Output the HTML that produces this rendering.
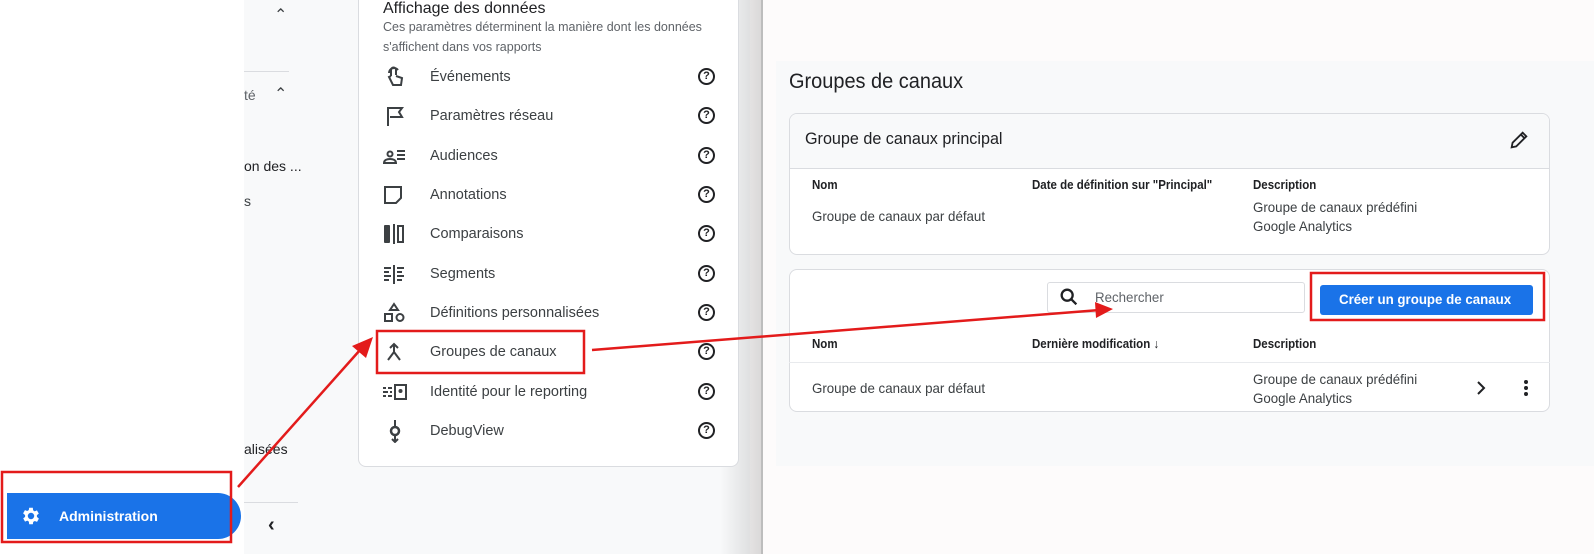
<!DOCTYPE html>
<html><head><meta charset="utf-8"><style>
*{box-sizing:border-box;margin:0;padding:0}
body{width:1594px;height:554px;position:relative;overflow:hidden;background:#fdfbfb;font-family:"Liberation Sans",sans-serif;color:#3c4043}
.a{position:absolute}
.t{font-size:14px;color:#3c4043;white-space:nowrap}
.row{position:absolute;left:382px;width:340px;height:40px}
.row .ic{position:absolute;left:0;top:8px;width:26px;height:24px}
.row .lb{position:absolute;left:48px;top:12px;font-size:14.5px;color:#3c4043}
.row .q{position:absolute;left:316px;top:11px;width:17px;height:17px;border:2px solid #202124;border-radius:50%;font-size:11px;font-weight:bold;text-align:center;line-height:13px;color:#202124}
.cond{display:inline-block;transform:scaleX(.95);transform-origin:left center;white-space:nowrap}
.c2{display:inline-block;transform:scaleX(.92);transform-origin:left center;white-space:nowrap}
.sm{font-size:12.5px;color:#3c4043}
</style></head><body>
<div class="a" style="left:0;top:0;width:244px;height:554px;background:#fff"></div>
<div class="a" style="left:244px;top:0;width:506px;height:554px;background:#f8f9fa"></div>
<div class="a" style="left:720px;top:0;width:42px;height:554px;background:linear-gradient(90deg,rgba(0,0,0,0),rgba(0,0,0,.14))"></div>
<div class="a" style="left:761px;top:0;width:2px;height:554px;background:#bdbdbd"></div>

<div class="a" style="left:274px;top:5px;font-size:16px;color:#3c4043">&#8963;</div>
<div class="a" style="left:244px;top:71px;width:45px;height:1px;background:#dadce0"></div>
<div class="a t" style="left:244px;top:87px;color:#5f6368">té</div>
<div class="a" style="left:274px;top:84px;font-size:16px">&#8963;</div>
<div class="a t" style="left:244px;top:158px;color:#202124">on des ...</div>
<div class="a t" style="left:244px;top:193px">s</div>
<div class="a t" style="left:244px;top:441px;color:#202124">alisées</div>
<div class="a" style="left:244px;top:502px;width:54px;height:1px;background:#dadce0"></div>
<div class="a" style="left:268px;top:514px;font-size:20px;font-weight:bold;color:#202124">&#8249;</div>

<div class="a" style="left:7px;top:493px;width:234px;height:46px;background:#1a73e8;border-radius:0 23px 23px 0"></div>
<svg class="a" style="left:20px;top:505px" width="22" height="22" viewBox="0 0 24 24"><path fill="#fff" d="M19.4 13a7.5 7.5 0 000-2l2.1-1.6-2-3.5-2.5 1a7.3 7.3 0 00-1.7-1L15 3h-4l-.4 2.6a7.3 7.3 0 00-1.7 1l-2.5-1-2 3.5L6.6 11a7.5 7.5 0 000 2l-2.1 1.6 2 3.5 2.5-1a7.3 7.3 0 001.7 1L11 21h4l.4-2.6a7.3 7.3 0 001.7-1l2.5 1 2-3.5zM13 15.5a3.5 3.5 0 110-7 3.5 3.5 0 010 7z" transform="translate(-1 0)"/></svg>
<div class="a" style="left:59px;top:508px;font-size:14px;font-weight:bold;color:#fff">Administration</div>

<div class="a" style="left:358px;top:-10px;width:381px;height:477px;background:#fff;border:1px solid #dadce0;border-radius:8px"></div>
<div class="a" style="left:383px;top:0;font-size:16px;color:#202124">Affichage des données</div>
<div class="a" style="left:383px;top:17px;font-size:12.5px;color:#5f6368;line-height:20px">Ces paramètres déterminent la manière dont les données<br>s'affichent dans vos rapports</div>

<div class="row" style="top:57px"><svg class="ic" viewBox="0 0 26 24"><path d="M9 11V5a2.5 2.5 0 015 0v5M7 8a5 5 0 019-3M9 11l-2 1 4 8h8l1-7-6-2" fill="none" stroke="#3c4043" stroke-width="2"/></svg><span class="lb">Événements</span><span class="q">?</span></div>
<div class="row" style="top:96px"><svg class="ic" viewBox="0 0 26 24"><path d="M6 22V4h14l-3 4 3 5H8" fill="none" stroke="#3c4043" stroke-width="2"/></svg><span class="lb">Paramètres réseau</span><span class="q">?</span></div>
<div class="row" style="top:136px"><svg class="ic" viewBox="0 0 26 24"><circle cx="8" cy="10" r="2.5" fill="none" stroke="#3c4043" stroke-width="2"/><path d="M2 19c0-3 3-4 6-4s6 1 6 4zM15 7h8M15 11h8M15 15h8" fill="none" stroke="#3c4043" stroke-width="2"/></svg><span class="lb">Audiences</span><span class="q">?</span></div>
<div class="row" style="top:175px"><svg class="ic" viewBox="0 0 26 24"><path d="M3 4h16v11l-5 5H3z" fill="none" stroke="#3c4043" stroke-width="2"/></svg><span class="lb">Annotations</span><span class="q">?</span></div>
<div class="row" style="top:214px"><svg class="ic" viewBox="0 0 26 24"><rect x="2" y="3" width="6" height="18" rx="1" fill="#3c4043"/><path d="M12 2v20" stroke="#3c4043" stroke-width="2"/><rect x="16" y="4" width="5" height="16" fill="none" stroke="#3c4043" stroke-width="2"/></svg><span class="lb">Comparaisons</span><span class="q">?</span></div>
<div class="row" style="top:254px"><svg class="ic" viewBox="0 0 26 24"><path d="M2 6h7M2 10h5M2 14h7M2 18h5M12 3v19M15 6h7M15 10h5M15 14h7M15 18h5" stroke="#3c4043" stroke-width="2"/></svg><span class="lb">Segments</span><span class="q">?</span></div>
<div class="row" style="top:293px"><svg class="ic" viewBox="0 0 26 24"><path d="M12 3l4 6H8z" fill="none" stroke="#3c4043" stroke-width="2"/><rect x="3" y="13" width="7" height="7" fill="none" stroke="#3c4043" stroke-width="2"/><circle cx="18" cy="16.5" r="3.5" fill="none" stroke="#3c4043" stroke-width="2"/></svg><span class="lb">Définitions personnalisées</span><span class="q">?</span></div>
<div class="row" style="top:332px"><svg class="ic" viewBox="0 0 26 24"><path d="M12 4v8l-6 8M12 12l6 8M8 8l4-4 4 4" fill="none" stroke="#3c4043" stroke-width="2"/></svg><span class="lb">Groupes de canaux</span><span class="q">?</span></div>
<div class="row" style="top:372px"><svg class="ic" viewBox="0 0 26 24"><path d="M1 8h3M6 8h4M1 12h5M8 12h2M1 16h3M6 16h4" stroke="#3c4043" stroke-width="2"/><rect x="13" y="5" width="11" height="14" fill="none" stroke="#3c4043" stroke-width="2"/><circle cx="18.5" cy="11" r="2" fill="#3c4043"/></svg><span class="lb">Identité pour le reporting</span><span class="q">?</span></div>
<div class="row" style="top:411px"><svg class="ic" viewBox="0 0 26 24"><path d="M13 1v6M13 17v6M10 20l3 3 3-3" fill="none" stroke="#3c4043" stroke-width="2"/><circle cx="13" cy="12" r="4" fill="none" stroke="#3c4043" stroke-width="2.5"/></svg><span class="lb">DebugView</span><span class="q">?</span></div>

<div class="a" style="left:776px;top:61px;width:818px;height:405px;background:#f8f9fa"></div>
<div class="a" style="left:789px;top:70px;font-size:21px;color:#202124"><span class="cond">Groupes de canaux</span></div>

<div class="a" style="left:789px;top:113px;width:761px;height:142px;background:#fff;border:1px solid #dadce0;border-radius:8px;overflow:hidden">
 <div style="height:55px;background:#f8f9fa;border-bottom:1px solid #dadce0"></div>
</div>
<div class="a" style="left:805px;top:129px;font-size:17px;color:#202124"><span class="cond">Groupe de canaux principal</span></div>
<svg class="a" style="left:1508px;top:129px" width="22" height="22" viewBox="0 0 24 24"><path d="M4 20l1-5L16 4l4 4L9 19z M14 6l4 4" fill="none" stroke="#202124" stroke-width="2"/></svg>
<div class="a sm" style="left:812px;top:178px;font-weight:bold;color:#202124"><span class="c2">Nom</span></div>
<div class="a sm" style="left:1032px;top:178px;font-weight:bold;color:#202124"><span class="c2">Date de définition sur "Principal"</span></div>
<div class="a sm" style="left:1253px;top:178px;font-weight:bold;color:#202124"><span class="c2">Description</span></div>
<div class="a" style="left:812px;top:208px;font-size:14px"><span class="cond">Groupe de canaux par défaut</span></div>
<div class="a" style="left:1253px;top:198px;font-size:14px;line-height:19px"><span class="cond">Groupe de canaux prédéfini<br>Google Analytics</span></div>

<div class="a" style="left:789px;top:269px;width:761px;height:143px;background:#fff;border:1px solid #dadce0;border-radius:8px"></div>
<div class="a" style="left:1047px;top:282px;width:258px;height:31px;border:1px solid #dadce0;border-radius:3px;background:#fff"></div>
<svg class="a" style="left:1058px;top:286px" width="22" height="22" viewBox="0 0 24 24"><circle cx="10" cy="10" r="6" fill="none" stroke="#202124" stroke-width="2.5"/><path d="M14 14l6 6" stroke="#202124" stroke-width="2.5"/></svg>
<div class="a" style="left:1095px;top:289px;font-size:14px;color:#5f6368"><span class="cond">Rechercher</span></div>
<div class="a" style="left:1320px;top:285px;width:213px;height:30px;background:#1a73e8;border-radius:3px"></div>
<div class="a" style="left:1339px;top:291px;font-size:14px;font-weight:bold;color:#fff"><span class="cond">Créer un groupe de canaux</span></div>
<div class="a sm" style="left:812px;top:337px;font-weight:bold;color:#202124"><span class="c2">Nom</span></div>
<div class="a sm" style="left:1032px;top:337px;font-weight:bold;color:#202124"><span class="c2">Dernière modification ↓</span></div>
<div class="a sm" style="left:1253px;top:337px;font-weight:bold;color:#202124"><span class="c2">Description</span></div>
<div class="a" style="left:789px;top:362px;width:761px;height:1px;background:#e8eaed"></div>
<div class="a" style="left:812px;top:380px;font-size:14px"><span class="cond">Groupe de canaux par défaut</span></div>
<div class="a" style="left:1253px;top:370px;font-size:14px;line-height:19px"><span class="cond">Groupe de canaux prédéfini<br>Google Analytics</span></div>
<svg class="a" style="left:1474px;top:380px" width="14" height="16" viewBox="0 0 14 16"><path d="M4 2l6 6-6 6" fill="none" stroke="#202124" stroke-width="2"/></svg>
<svg class="a" style="left:1520px;top:378px" width="12" height="20" viewBox="0 0 12 20"><circle cx="6" cy="4" r="2" fill="#202124"/><circle cx="6" cy="10" r="2" fill="#202124"/><circle cx="6" cy="16" r="2" fill="#202124"/></svg>

<svg class="a" style="left:0;top:0" width="1594" height="554">
<g fill="none" stroke="#e31b1b" stroke-width="2.5">
<rect x="2" y="472" width="229" height="70"/>
<rect x="377" y="331" width="207" height="42"/>
<rect x="1311" y="273" width="233" height="47"/>
<path d="M238 487L360 350"/>
<path d="M592 350L1100 310"/>
</g>
<path d="M373 337L352 346L366 358Z" fill="#e31b1b"/>
<path d="M1113 309L1095 302L1096 318Z" fill="#e31b1b"/>
</svg>
</body></html>
